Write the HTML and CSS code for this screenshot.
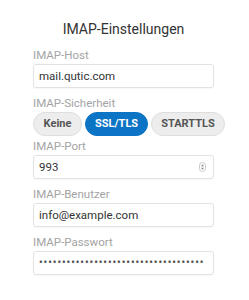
FILE: index.html
```html
<!DOCTYPE html>
<html lang="de">
<head>
<meta charset="utf-8">
<title>IMAP-Einstellungen</title>
<link rel="stylesheet" href="styles.css">
</head>
<body>
<div class="panel">
  <h1 class="title">IMAP-Einstellungen</h1>
  <div class="field">
    <label class="label">IMAP-Host</label>
    <div class="input">mail.qutic.com</div>
  </div>
  <div class="field field-tight">
    <label class="label">IMAP-Sicherheit</label>
    <div class="segments">
      <span class="pill pill-wide">Keine</span>
      <span class="pill pill-active">SSL/TLS</span>
      <span class="pill">STARTTLS</span>
    </div>
  </div>
  <div class="field">
    <label class="label">IMAP-Port</label>
    <div class="input input-number">993
      <svg class="spinner" width="7" height="10" viewBox="0 0 7 10">
        <rect x="0.5" y="0.5" width="6" height="9" rx="3" fill="#fff" stroke="#c8c8c8"/>
        <path d="M3.5 2.3 L5 4.2 L2 4.2 Z" fill="#888"/>
        <path d="M3.5 7.7 L5 5.8 L2 5.8 Z" fill="#888"/>
      </svg>
    </div>
  </div>
  <div class="field">
    <label class="label">IMAP-Benutzer</label>
    <div class="input">info@example.com</div>
  </div>
  <div class="field">
    <label class="label">IMAP-Passwort</label>
    <div class="input input-password">••••••••••••••••••••••••••••••••••••</div>
  </div>
</div>
</body>
</html>
```
FILE: styles.css
```css
html, body {
  margin: 0;
  padding: 0;
  background: #ffffff;
}
body {
  font-family: Roboto, "Liberation Sans", Arial, sans-serif;
  color: #333333;
}
.panel {
  width: 181px;
  margin-left: 33px;
  padding-top: 20px;
}
.title {
  margin: 0 0 10px 0;
  font-size: 14px;
  font-weight: 400;
  line-height: 18px;
  text-align: center;
  color: #333;
}
.field {
  display: flex;
  flex-direction: column;
  gap: 2px;
  margin-bottom: 8px;
}
.field-tight {
  margin-bottom: 3px;
}
.label {
  font-size: 11.5px;
  line-height: 14px;
  color: #a3a3a3;
}
.input {
  position: relative;
  box-sizing: border-box;
  height: 24px;
  border: 1px solid #e2e2e2;
  border-radius: 3px;
  box-shadow: 0 1px 1px rgba(0, 0, 0, 0.03);
  padding: 0 5px;
  font-size: 11.5px;
  line-height: 22px;
  color: #333;
  white-space: nowrap;
  overflow: hidden;
}
.input-password {
  font-size: 10px;
  font-weight: 700;
  letter-spacing: 1px;
  color: #555;
  line-height: 22px;
}
.spinner {
  position: absolute;
  right: 7px;
  top: 6px;
}
.segments {
  display: flex;
  gap: 3px;
}
.pill {
  box-sizing: border-box;
  height: 24px;
  padding: 0 9px;
  border-radius: 12px;
  border: 1px solid #dedede;
  background: #ededed;
  color: #555;
  font-size: 11px;
  font-weight: 700;
  line-height: 22px;
  text-align: center;
}
.pill-wide {
  min-width: 49px;
}
.pill-active {
  background: #0b74c4;
  border-color: #0b74c4;
  color: #fff;
}
```
